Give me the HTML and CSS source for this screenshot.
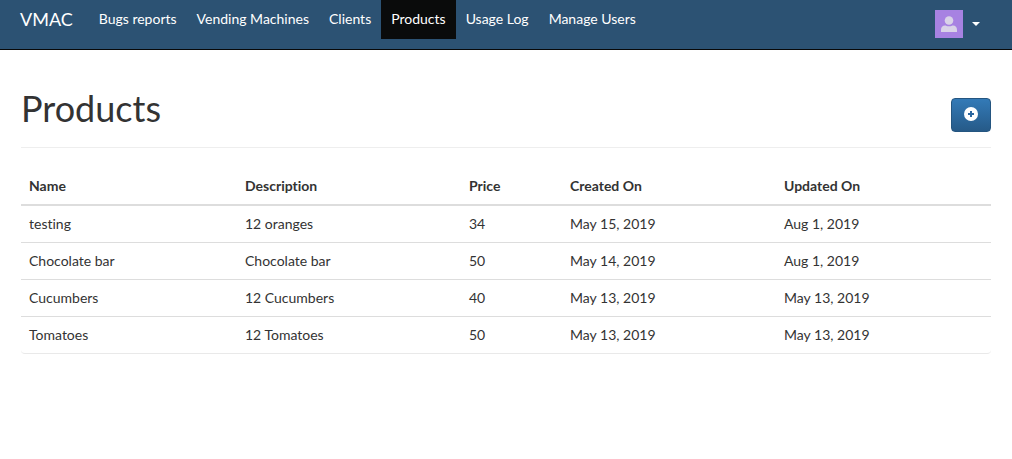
FILE: index.html
```html
<!DOCTYPE html>
<html lang="en">
<head>
<meta charset="utf-8">
<title>VMAC - Products</title>
<link rel="stylesheet" href="styles.css">
</head>
<body>
<nav class="navbar">
  <a class="brand" href="#">VMAC</a>
  <div class="nav-links">
    <a href="#">Bugs reports</a>
    <a href="#">Vending Machines</a>
    <a href="#">Clients</a>
    <a href="#" class="active" aria-current="page">Products</a>
    <a href="#">Usage Log</a>
    <a href="#">Manage Users</a>
  </div>
  <button class="account" type="button" aria-label="Account">
    <span class="avatar"><svg width="16" height="16" viewBox="0 0 16 16" fill="#d9d3e8"><circle cx="8" cy="4.500" r="4.300"/><path d="M0 16v-2c0-3 1.500-4.500 4-4.500 1 0 2 .8 4 .8s3-.8 4-.8c2.500 0 4 1.500 4 4.500v2z"/></svg></span>
    <span class="caret"></span>
  </button>
</nav>
<main class="container">
  <header class="page-header">
    <h1>Products</h1>
    <button class="add" type="button" aria-label="Add product"><svg width="14" height="14" viewBox="0 0 14 14"><circle cx="7" cy="7" r="7" fill="#fff"/><path d="M7 4v6M4 7h6" stroke="#2b669f" stroke-width="2"/></svg></button>
  </header>
  <div class="panel">
    <table class="products">
      <thead><tr><th class="c-name">Name</th><th class="c-desc">Description</th><th class="c-price">Price</th><th class="c-created">Created On</th><th>Updated On</th></tr></thead>
      <tbody>
        <tr><td>testing</td><td>12 oranges</td><td>34</td><td>May 15, 2019</td><td>Aug 1, 2019</td></tr>
        <tr><td>Chocolate bar</td><td>Chocolate bar</td><td>50</td><td>May 14, 2019</td><td>Aug 1, 2019</td></tr>
        <tr><td>Cucumbers</td><td>12 Cucumbers</td><td>40</td><td>May 13, 2019</td><td>May 13, 2019</td></tr>
        <tr><td>Tomatoes</td><td>12 Tomatoes</td><td>50</td><td>May 13, 2019</td><td>May 13, 2019</td></tr>
      </tbody>
    </table>
  </div>
</main>
</body>
</html>
```
FILE: styles.css
```css
* { box-sizing: border-box; }
body { margin: 0; background: #fff; color: #333; font: 14px/20px Lato, sans-serif; font-variant-ligatures: none; }
.navbar { display: flex; align-items: flex-start; min-height: 50px; padding: 0 20px; background: #2c5273; border-bottom: 1px solid #080808; }
.navbar a { color: #fff; text-decoration: none; }
.brand { font-size: 18px; line-height: 38px; margin-right: 16px; }
.nav-links { display: flex; }
.nav-links a { padding: 9px 10px 10px; }
.nav-links .active { background: #0a0b0b; }
.account { display: flex; align-items: center; gap: 9px; margin: 10px 12px 0 auto; padding: 0; border: 0; background: none; }
.avatar { display: flex; align-items: center; justify-content: center; width: 28px; height: 28px; background: #a782e2; }
.caret { border: 4px solid transparent; border-top-color: #fff; border-bottom: 0; }
.container { padding: 0 21px; }
.page-header { display: flex; justify-content: space-between; align-items: flex-start; margin-top: 38px; padding-bottom: 15px; border-bottom: 1px solid #eee; }
h1 { margin: 0; font-size: 36px; line-height: 40px; font-weight: 400; }
.add { display: flex; align-items: center; justify-content: center; width: 40px; height: 34px; margin-top: 10px; padding: 0 1px 2px 0; border: 1px solid #245580; border-radius: 4px; background: linear-gradient(#337ab7, #265a88); }
.panel { margin-top: 20px; border-bottom: 1px solid #e9e9e9; border-radius: 4px; }
.products { width: 100%; border-collapse: collapse; table-layout: fixed; }
th, td { padding: 8px; text-align: left; border-bottom: 1px solid #ddd; }
th { border-bottom-width: 2px; font-weight: 700; }
tbody tr:last-child td { border-bottom: 0; }
.c-name { width: 216px; }
.c-desc { width: 224px; }
.c-price { width: 101px; }
.c-created { width: 214px; }
```
